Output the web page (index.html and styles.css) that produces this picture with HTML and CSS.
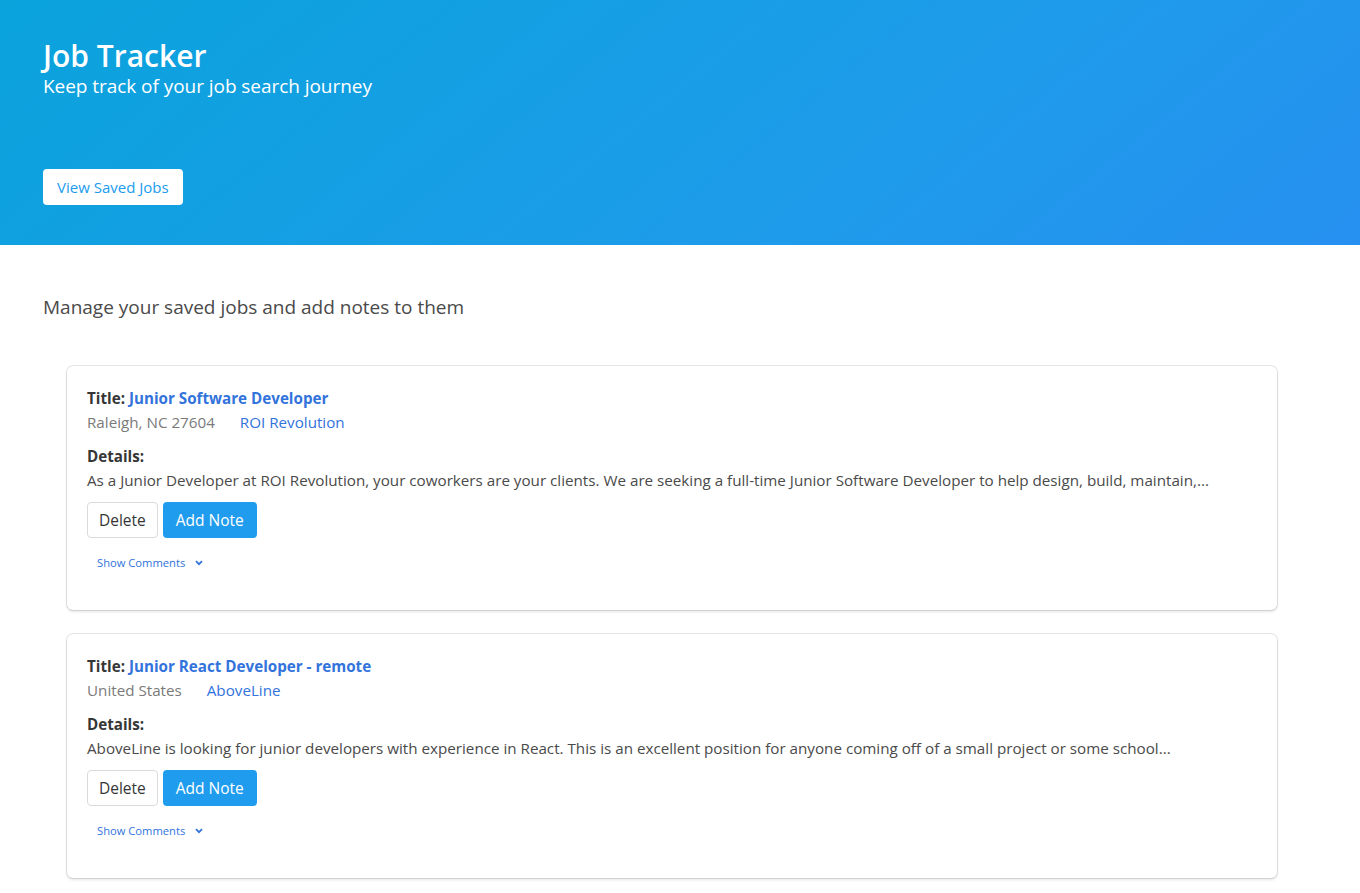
FILE: index.html
```html
<!DOCTYPE html>
<html lang="en">
<head>
<meta charset="utf-8">
<title>Job Tracker</title>
<link rel="stylesheet" href="styles.css">
</head>
<body>
<header class="hero">
  <div class="hero-body">
    <h1 class="title">Job Tracker</h1>
    <h2 class="subtitle">Keep track of your job search journey</h2>
  </div>
  <div class="hero-foot">
    <a class="btn btn-light" href="#">View Saved Jobs</a>
  </div>
</header>
<main class="main">
  <p class="intro">Manage your saved jobs and add notes to them</p>
  <div class="jobs">
    <article class="box">
      <p class="job-title"><strong>Title:</strong> <a href="#">Junior Software Developer</a></p>
      <p class="meta"><span class="loc">Raleigh, NC 27604</span><a href="#" class="company">ROI Revolution</a></p>
      <p class="details-label">Details:</p>
      <p class="details">As a Junior Developer at ROI Revolution, your coworkers are your clients. We are seeking a full-time Junior Software Developer to help design, build, maintain,...</p>
      <div class="buttons">
        <button class="btn btn-outline">Delete</button>
        <button class="btn btn-info">Add Note</button>
      </div>
      <a class="comments" href="#">Show Comments <svg width="8" height="6" viewBox="0 0 8 6"><path d="M1 1.2 L4 4.2 L7 1.2" fill="none" stroke="currentColor" stroke-width="1.8"/></svg></a>
    </article>
    <article class="box">
      <p class="job-title"><strong>Title:</strong> <a href="#">Junior React Developer - remote</a></p>
      <p class="meta"><span class="loc">United States</span><a href="#" class="company">AboveLine</a></p>
      <p class="details-label">Details:</p>
      <p class="details">AboveLine is looking for junior developers with experience in React. This is an excellent position for anyone coming off of a small project or some school...</p>
      <div class="buttons">
        <button class="btn btn-outline">Delete</button>
        <button class="btn btn-info">Add Note</button>
      </div>
      <a class="comments" href="#">Show Comments <svg width="8" height="6" viewBox="0 0 8 6"><path d="M1 1.2 L4 4.2 L7 1.2" fill="none" stroke="currentColor" stroke-width="1.8"/></svg></a>
    </article>
  </div>
</main>
</body>
</html>
```
FILE: styles.css
```css
* { box-sizing: border-box; }
html, body { margin: 0; padding: 0; }
body {
  font-family: "Open Sans", "Noto Sans", sans-serif;
  color: #4a4a4a;
  background: #fff;
  font-size: 16px;
  line-height: 1.5;
}
p, h1, h2 { margin: 0; }
a { text-decoration: none; }

.hero {
  background: linear-gradient(141deg, #0aa3dc 0%, #1e9bea 65%, #2690f0 100%);
  color: #fff;
  height: 245px;
  padding: 38px 43px 0;
}
.title {
  font-size: 30px;
  font-weight: 600;
  line-height: 1.2;
}
.subtitle {
  font-size: 19px;
  font-weight: 400;
  line-height: 24px;
  letter-spacing: -0.05px;
}
.hero-foot { margin-top: 71px; }

.btn {
  display: inline-flex;
  align-items: center;
  justify-content: center;
  height: 36px;
  padding: 0 11px;
  border-radius: 4px;
  font-family: inherit;
  font-size: 15.5px;
  border: 1px solid transparent;
  cursor: pointer;
}
.btn-light {
  background: #fff;
  color: #209cee;
  padding: 0 13px;
  font-size: 15px;
}
.main { padding: 47px 82px 40px 43px; }
.intro {
  font-size: 19px;
  line-height: 30px;
}
.jobs {
  margin: 44px 1px 0 24px;
  display: flex;
  flex-direction: column;
  gap: 24px;
}
.box {
  background: #fff;
  border-radius: 6px;
  box-shadow: 0 2px 3px rgba(10,10,10,0.1), 0 0 0 1px rgba(10,10,10,0.1);
  padding: 20px 20px 26px;
  height: 244px;
}
.job-title { font-size: 15.2px; line-height: 24px; color: #363636; }
.job-title strong { font-weight: 700; }
.job-title a { color: #3273dc; font-weight: 700; }
.meta { font-size: 15.2px; line-height: 24px; }
.loc { color: #7a7a7a; margin-right: 25px; }
.company { color: #3273dc; }
.details-label { margin-top: 10px; font-size: 15.2px; font-weight: 700; line-height: 24px; color: #363636; }
.details { font-size: 15.2px; line-height: 24px; }
.buttons { display: flex; gap: 5px; margin-top: 10px; }
.btn-outline { background: #fff; border-color: #dbdbdb; color: #363636; }
.btn-info { background: #209cee; color: #fff; padding: 0 12px; }
.comments {
  display: inline-flex;
  align-items: center;
  gap: 10px;
  margin: 14px 0 0 10px;
  font-size: 11.2px;
  color: #3273dc;
  line-height: 22px;
}
.comments svg { color: #3273dc; }
```
